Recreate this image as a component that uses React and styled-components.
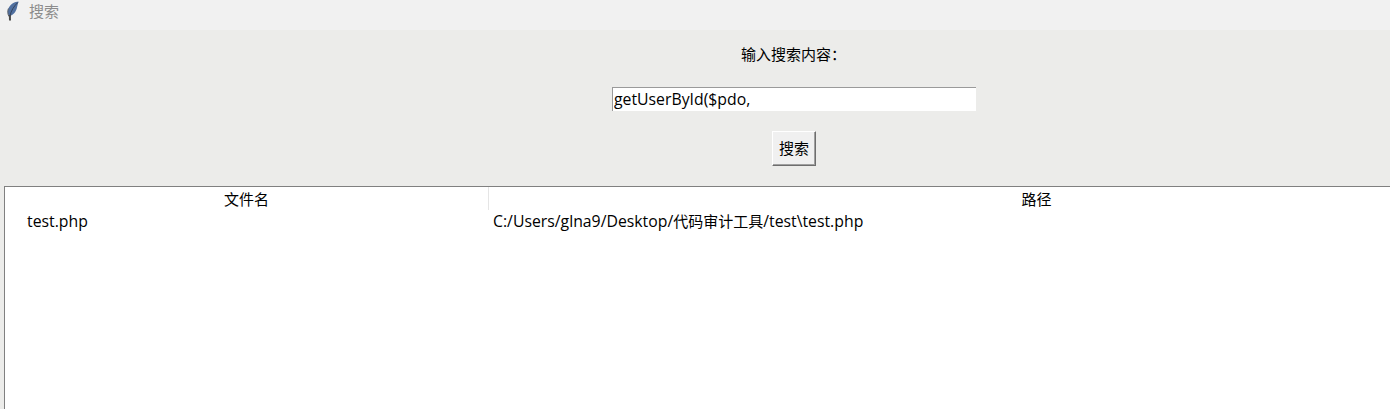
import React from "react";
import styled, { createGlobalStyle } from "styled-components";

const uiFont = `"Open Sans", "Noto Sans CJK SC", sans-serif`;

const GlobalStyle = createGlobalStyle`
  html, body {
    margin: 0;
    padding: 0;
    width: 1390px;
    height: 409px;
    overflow: hidden;
    background: #ececea;
  }
`;

// the window is wider than the capture, so the content centres off-screen
const Window = styled.div`
  width: 1588px;
  height: 409px;
  display: flex;
  flex-direction: column;
  font-family: ${uiFont};
  font-size: 15px;
  color: #000;
  overflow: hidden;
`;

const TitleBar = styled.div`
  height: 30px;
  flex: none;
  display: flex;
  align-items: flex-start;
  gap: 10px;
  padding: 1px 0 0 7px;
  box-sizing: border-box;
  background: #f1f1f1;
  color: #8c8c8c;
  font-size: 15px;
`;

const TitleText = styled.span`
  line-height: 20px;
`;

const SearchPanel = styled.div`
  height: 156px;
  flex: none;
  display: flex;
  flex-direction: column;
  align-items: center;
  background: #ececea;
`;

const PromptLabel = styled.div`
  height: 20px;
  line-height: 20px;
  margin-top: 14px;
  margin-right: 1px;
  padding-bottom: 1px;
`;

const SearchInput = styled.input`
  box-sizing: border-box;
  width: 364px;
  height: 24px;
  margin-top: 22px;
  padding: 0 0 1px 1px;
  border: none;
  border-top: 1px solid #9a9a9a;
  border-left: 1px solid #9a9a9a;
  background: #fff;
  font-family: ${uiFont};
  font-size: 15.8px;
  color: #000;
  outline: none;
`;

const SearchButton = styled.button`
  box-sizing: border-box;
  width: 44px;
  height: 35px;
  margin-top: 20px;
  padding: 0 0 2px;
  border: 1px solid;
  border-color: #fff #6e6e6e #6e6e6e #fff;
  box-shadow: inset -1px -1px 0 #a0a0a0;
  background: #f0f0f0;
  font-family: ${uiFont};
  font-size: 15px;
  color: #000;
`;

const ResultTable = styled.div`
  flex: 1;
  margin-left: 4px;
  margin-right: 4px;
  border-top: 1px solid #808080;
  border-left: 1px solid #808080;
  background: #fff;
`;

const Row = styled.div`
  display: grid;
  grid-template-columns: 484px 1fr;
  height: ${(props) => props.$height}px;
  align-items: center;
`;

const HeaderCell = styled.div`
  height: 100%;
  display: flex;
  align-items: center;
  justify-content: center;
  padding-bottom: 1px;
  box-sizing: border-box;
  ${(props) => props.$divider && "border-right: 1px solid #e5e5e5;"}
`;

const Cell = styled.div`
  font-size: 15.8px;
  line-height: 22px;
  white-space: nowrap;
  padding-left: ${(props) => props.$indent}px;
`;

const CjkRun = styled.span`
  font-size: 15px;
`;

const FeatherIcon = () => (
  <svg width="12" height="20" viewBox="0 0 12 20">
    <path d="M11.5 0.5 C8 0.6 3.4 3 1.4 7.5 C0.4 10.2 0.6 13 2 15.5 C6.6 14 9.2 10.4 10 6.5 C10.5 4.2 11 2 11.5 0.5 Z" fill="#4f6f9f" />
    <path d="M10.8 1.5 C7 5 4.2 9.5 2.8 15.2" fill="none" stroke="#34425c" strokeWidth="1" />
    <path d="M1.4 7.5 C0.4 10.2 0.6 13 2 15.5" fill="none" stroke="#5a5f68" strokeWidth="1" />
    <path d="M2.9 14 L3 19.5" fill="none" stroke="#4a4a4a" strokeWidth="2" />
  </svg>
);

const App = () => (
  <>
    <GlobalStyle />
    <Window>
      <TitleBar>
        <FeatherIcon />
        <TitleText>搜索</TitleText>
      </TitleBar>
      <SearchPanel>
        <PromptLabel>输入搜索内容：</PromptLabel>
        <SearchInput defaultValue="getUserById($pdo," />
        <SearchButton>搜索</SearchButton>
      </SearchPanel>
      <ResultTable>
        <Row $height={23}>
          <HeaderCell $divider>文件名</HeaderCell>
          <HeaderCell>路径</HeaderCell>
        </Row>
        <Row $height={22}>
          <Cell $indent={22}>test.php</Cell>
          <Cell $indent={4}>C:/Users/glna9/Desktop/<CjkRun>代码审计工具</CjkRun>/test\test.php</Cell>
        </Row>
      </ResultTable>
    </Window>
  </>
);

export default App;
